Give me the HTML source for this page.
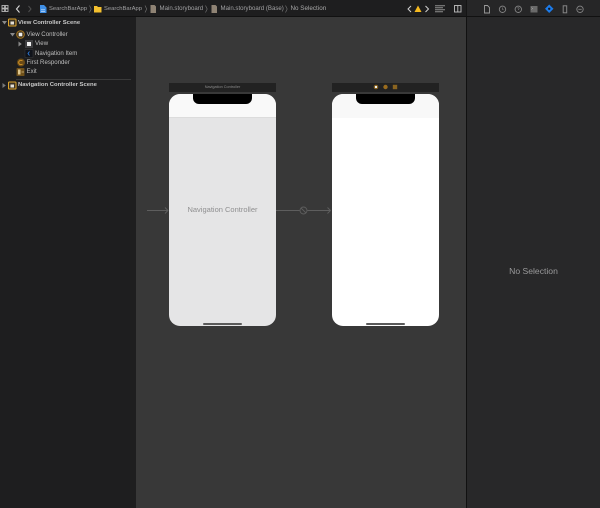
<!DOCTYPE html>
<html><head><meta charset="utf-8">
<style>
html,body{margin:0;padding:0;width:600px;height:508px;overflow:hidden;background:#383838;font-family:"Liberation Sans",sans-serif}
div,span{position:absolute;box-sizing:border-box}
.t{white-space:nowrap;color:#a5a5a7;font-size:6.1px;line-height:8px;height:8px;filter:blur(.25px)}
.s{white-space:nowrap;color:#dcdcdc;font-size:5.9px;line-height:8px;height:8px;filter:blur(.2px)}
svg{position:absolute;overflow:visible}
.phone{top:94px;width:107px;height:232px;border-radius:11px;overflow:hidden}
.notch{left:24px;top:0;width:59px;height:9.500px;background:#000;border-radius:0 0 6px 6px}
.home{left:34px;top:228.500px;width:39px;height:2px;background:#5a5a5a;border-radius:1px}
</style></head><body>
<!-- canvas -->
<div style="left:136px;top:16px;width:330px;height:492px;background:#383838"></div>
<!-- sidebar -->
<div style="left:0;top:16px;width:136px;height:492px;background:#1e1e1f"></div>
<!-- inspector -->
<div style="left:466px;top:16px;width:134px;height:492px;background:#282829;border-left:1px solid #111"></div>
<!-- toolbar -->
<div style="left:0;top:0;width:466px;height:16px;background:#1e1e1f"></div>
<div style="left:466px;top:0;width:134px;height:16px;background:#262627;border-left:1px solid #151515"></div>
<div style="left:0;top:15.500px;width:600px;height:.5px;background:#111"></div>

<!-- toolbar icons -->
<svg style="left:0;top:0" width="600" height="16" viewBox="0 0 600 16" fill="none">
<g stroke="#b5b5b5" stroke-width=".9"><rect x="2" y="5.500" width="2.600" height="2.600"/><rect x="5.400" y="5.500" width="2.600" height="2.600"/><rect x="2" y="8.900" width="2.600" height="2.600"/><rect x="5.400" y="8.900" width="2.600" height="2.600"/></g>
<path d="M19.500 5.500L16.500 9L19.500 12.500" stroke="#d8d8d8" stroke-width="1.100"/>
<path d="M28.500 6L31 9L28.500 12" stroke="#4e4e4e" stroke-width="1"/>
<path d="M40 5h4l2.500 2.500V13H40z" fill="#3f8fe6"/><path d="M41 9.800h4M41 11.300h4" stroke="#d6e8fb" stroke-width=".6"/>
<path d="M89.500 5.500L91.200 9L89.500 12.500" stroke="#777" stroke-width=".6"/>
<path d="M94 6h3l1 1h3.500v5.500H94z" fill="#f4c02e"/>
<path d="M145 5.500L146.700 9L145 12.500" stroke="#777" stroke-width=".6"/>
<path d="M150.500 5h4l1.500 1.500V13h-5.500z" fill="#8f8374"/>
<path d="M205.500 5.500L207.200 9L205.500 12.500" stroke="#777" stroke-width=".6"/>
<path d="M211.500 5h4l1.500 1.500V13h-5.500z" fill="#8f8374"/>
<path d="M285.500 5.500L287.200 9L285.500 12.500" stroke="#777" stroke-width=".6"/>
<path d="M411 6L408 9L411 12" stroke="#d0d0d0" stroke-width="1"/>
<path d="M418 5.500L421.500 12H414.500z" fill="#f5b91f"/>
<path d="M425.500 6L428.500 9L425.500 12" stroke="#d0d0d0" stroke-width="1"/>
<path d="M435 5.800h10M435 7.800h8M435 9.800h10M435 11.800h8" stroke="#8e8e8e" stroke-width="1"/>
<rect x="454.500" y="5.500" width="6.500" height="6.500" stroke="#c0c0c0" stroke-width=".9"/><path d="M457.800 5.500v6.500" stroke="#c0c0c0" stroke-width=".9"/>
<path d="M484.500 5.500h3l2 2V13h-5z" stroke="#9a9a9a" stroke-width=".9"/>
<circle cx="502.500" cy="9.300" r="3.200" stroke="#858585" stroke-width=".9"/><path d="M502.500 7.500V9.300l1 .5" stroke="#858585" stroke-width=".6"/>
<circle cx="518.300" cy="9.300" r="3.200" stroke="#858585" stroke-width=".9"/><path d="M517.300 8.300c.5-1.200 2-.6 1.800.4-.1.500-.8.500-.8 1.300" stroke="#858585" stroke-width=".6"/>
<rect x="530.500" y="6" width="7" height="6.500" fill="#6a6a6a"/><path d="M531.500 7.500l1 1-1 1" stroke="#ddd" stroke-width=".4"/>
<path d="M549.200 4.500L553.500 8.800L549.200 13L545 8.800z" fill="#1c7bea"/><circle cx="549.200" cy="8.800" r="1.200" fill="#1b1b1b"/>
<rect x="563.200" y="5.800" width="3.500" height="7" stroke="#858585" stroke-width="1"/>
<circle cx="580" cy="9.300" r="3.200" stroke="#858585" stroke-width=".9"/><path d="M578.300 9.300h3.400" stroke="#858585" stroke-width=".8"/>
</svg>
<div class="t" style="left:49px;top:5px;color:#a0a0a2;font-size:5.850px">SearchBarApp</div>
<div class="t" style="left:104px;top:5px;color:#a0a0a2;font-size:5.850px">SearchBarApp</div>
<div class="t" style="left:159.500px;top:5px;color:#a0a0a2">Main.storyboard</div>
<div class="t" style="left:220.500px;top:5px;color:#a0a0a2">Main.storyboard (Base)</div>
<div class="t" style="left:290.500px;top:5px;color:#a8a8a8;font-size:6.300px">No Selection</div>

<!-- outline -->
<svg style="left:0;top:16px" width="136" height="80" viewBox="0 16 136 80" fill="none">
<path d="M2 21h5l-2.500 3.500z" fill="#8a8a8a"/>
<rect x="8.500" y="19" width="7.500" height="7" rx=".8" fill="#3a3326" stroke="#dca32b" stroke-width="1"/><rect x="10.500" y="21.500" width="3.500" height="3" fill="#e5e0d5"/>
<path d="M10 33h5l-2.500 3.500z" fill="#8a8a8a"/>
<circle cx="20.500" cy="34.500" r="3.800" fill="#3b2f18" stroke="#a87720" stroke-width="1"/><rect x="18.700" y="32.700" width="3.600" height="3.600" fill="#eee"/>
<path d="M18.500 41.500v5l3.300-2.500z" fill="#8a8a8a"/>
<rect x="25" y="40" width="8" height="8" fill="#3e3e40"/><rect x="27" y="42" width="4" height="4" fill="#f0f0f0"/>
<rect x="25" y="49.500" width="8" height="8" fill="#10131a" stroke="#3a3a3a" stroke-width=".5"/><path d="M29.500 51.500L28 53.500L29.500 55.500" stroke="#2f7fe0" stroke-width=".9"/>
<rect x="17" y="58.500" width="8" height="8" rx="4" fill="#6a4a16"/><path d="M22.500 61a2.200 2.200 0 1 0 0 3" stroke="#d99a2a" stroke-width=".9"/>
<rect x="16.500" y="68" width="8" height="8" rx=".8" fill="#70511a"/><rect x="18" y="69.500" width="2.500" height="5" fill="#e0c890"/><path d="M21.500 72h2.500" stroke="#e0c890" stroke-width=".7"/>
<path d="M2.500 83v5l3.300-2.500z" fill="#7a7a7a"/>
<rect x="8.500" y="82" width="7.500" height="7" rx=".8" fill="#3a3326" stroke="#dca32b" stroke-width="1"/><rect x="10.500" y="84.500" width="3.500" height="3" fill="#e5e0d5"/>
</svg>
<div class="s" style="left:18px;top:19px;font-weight:bold;color:#c8c8c8">View Controller Scene</div>
<div class="t" style="left:26.500px;top:30.500px;color:#bdbdbd">View Controller</div>
<div class="t" style="left:35px;top:40px;color:#bdbdbd">View</div>
<div class="t" style="left:35px;top:49.500px;color:#bdbdbd">Navigation Item</div>
<div class="t" style="left:26.500px;top:58.500px;color:#bdbdbd">First Responder</div>
<div class="t" style="left:26.500px;top:67.500px;color:#bdbdbd">Exit</div>
<div style="left:16px;top:78.500px;width:115px;height:1px;background:#3a3a3a"></div>
<div class="s" style="left:18px;top:81px;font-weight:bold;color:#c8c8c8">Navigation Controller Scene</div>

<!-- scene bars -->
<div style="left:169px;top:83px;width:107px;height:8.500px;background:#222"></div>
<div class="t" style="left:169px;top:83.200px;width:107px;text-align:center;font-size:3.800px;color:#8c8c8c">Navigation Controller</div>
<div style="left:332px;top:83px;width:107px;height:8.500px;background:#222"></div>
<svg style="left:370px;top:83px" width="30" height="8" fill="none">
<circle cx="6" cy="4" r="2.300" fill="#8a6420"/><rect x="5" y="3" width="2" height="2" fill="#eee"/>
<circle cx="15.500" cy="4" r="2.200" fill="#9a6c1e"/>
<rect x="22.800" y="1.800" width="4.400" height="4.400" fill="#8a6420"/>
</svg>

<!-- phones -->
<div class="phone" style="left:169px;background:#e5e5e6">
<div style="left:0;top:0;width:107px;height:24px;background:#f9f9f9;border-bottom:.5px solid #dcdcdc"></div>
<div class="notch"></div>
<div class="home"></div>
</div>
<div class="t" style="left:169px;top:205px;width:107px;height:10px;line-height:10px;text-align:center;font-size:7.500px;color:#8f8f90">Navigation Controller</div>

<div class="phone" style="left:332px;background:#fff">
<div style="left:0;top:0;width:107px;height:24px;background:#f8f8f8"></div>
<div class="notch"></div>
<div class="home"></div>
</div>

<!-- arrows -->
<svg style="left:0;top:0" width="600" height="508" viewBox="0 0 600 508" fill="none">
<path d="M147 210.500H168M165 207.500L168 210.500L165 213.500" stroke="#5e5e5e" stroke-width=".9"/>
<path d="M276 210.500H299.500M307.500 210.500H330.500M327.500 207.500L330.500 210.500L327.500 213.500" stroke="#5e5e5e" stroke-width=".9"/>
<circle cx="303.500" cy="210.500" r="3.500" stroke="#5e5e5e" stroke-width=".9"/><path d="M301 208L306 213" stroke="#5e5e5e" stroke-width=".9"/>
</svg>

<!-- No selection -->
<div class="t" style="left:467px;top:265px;width:133px;height:12px;line-height:12px;text-align:center;font-size:8.600px;color:#9a9a9b">No Selection</div>
</body></html>
